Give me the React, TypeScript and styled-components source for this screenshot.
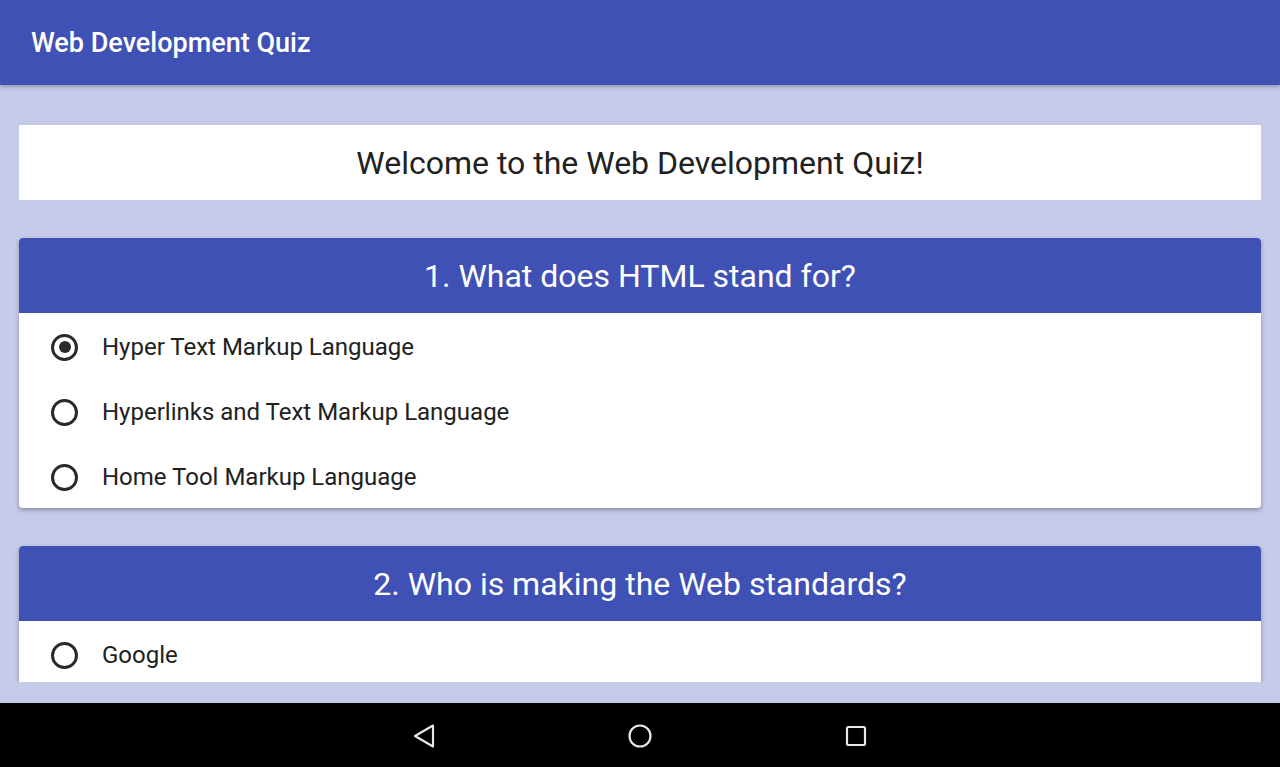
import styled, { createGlobalStyle } from 'styled-components';

const GlobalStyle = createGlobalStyle`
	html, body {
		margin: 0;
		padding: 0;
		background: #c5cae9;
		font-family: Roboto, "Noto Sans", sans-serif;
	}
`;

type Question = {
	title: string;
	options: string[];
	selected: number | null;
};

const questions: Question[] = [
	{
		title: '1. What does HTML stand for?',
		options: ['Hyper Text Markup Language', 'Hyperlinks and Text Markup Language', 'Home Tool Markup Language'],
		selected: 0,
	},
	{
		title: '2. Who is making the Web standards?',
		options: ['Google'],
		selected: null,
	},
];

const App = () => {
	return (
		<Screen>
			<GlobalStyle />
			<AppBar>
				<AppTitle>Web Development Quiz</AppTitle>
			</AppBar>
			<Content>
				<Welcome>Welcome to the Web Development Quiz!</Welcome>
				{questions.map((q) => (
					<Card key={q.title}>
						<CardHeader>{q.title}</CardHeader>
						{q.options.map((opt, i) => (
							<OptionRow key={opt}>
								<Radio $checked={q.selected === i} />
								<OptionText>{opt}</OptionText>
							</OptionRow>
						))}
					</Card>
				))}
			</Content>
			<NavBar>
				<svg width="24" height="26" viewBox="0 0 24 26">
					<path d="M21 2.5 L3 13 L21 23.5 Z" fill="none" stroke="#e8e8e8" strokeWidth="2.2" strokeLinejoin="round" />
				</svg>
				<svg width="26" height="26" viewBox="0 0 26 26">
					<circle cx="13" cy="13" r="10.5" fill="none" stroke="#e8e8e8" strokeWidth="2.2" />
				</svg>
				<svg width="24" height="24" viewBox="0 0 24 24">
					<rect x="3" y="3" width="18" height="18" rx="1.5" fill="none" stroke="#e8e8e8" strokeWidth="2.2" />
				</svg>
			</NavBar>
		</Screen>
	);
};

export default App;

const Screen = styled.div`
	width: 1280px;
	height: 767px;
	display: flex;
	flex-direction: column;
	background: #c5cae9;
	overflow: hidden;
`;

const AppBar = styled.header`
	height: 85px;
	flex-shrink: 0;
	background: #3f51b5;
	display: flex;
	align-items: center;
	padding-left: 31px;
	box-shadow: 0 2px 4px rgba(0, 0, 0, 0.25);
	position: relative;
	z-index: 2;
`;

const AppTitle = styled.h1`
	margin: 0;
	color: #fff;
	font-size: 27px;
	font-weight: 500;
`;

const Content = styled.main`
	height: 597px;
	flex-shrink: 0;
	overflow: hidden;
	padding: 40px 19px 0;
	box-sizing: border-box;
	display: flex;
	flex-direction: column;
	gap: 38px;
`;

const Welcome = styled.div`
	background: #fff;
	height: 75px;
	flex-shrink: 0;
	display: flex;
	align-items: center;
	justify-content: center;
	color: #212121;
	font-size: 32px;
`;

const Card = styled.section`
	flex-shrink: 0;
	background: #fff;
	border-radius: 4px;
	overflow: hidden;
	box-shadow: 0 2px 4px rgba(0, 0, 0, 0.3);
`;

const CardHeader = styled.h2`
	margin: 0;
	height: 75px;
	background: #3f51b5;
	color: #fff;
	font-size: 32px;
	font-weight: 400;
	display: flex;
	align-items: center;
	justify-content: center;
`;

const OptionRow = styled.label`
	height: 65px;
	display: flex;
	align-items: center;
	padding-left: 32px;
	padding-top: 3px;
	box-sizing: border-box;
`;

const Radio = styled.span<{ $checked: boolean }>`
	width: 21px;
	height: 21px;
	border: 3px solid #2a2a2a;
	border-radius: 50%;
	display: flex;
	align-items: center;
	justify-content: center;
	box-sizing: content-box;
	&::after {
		content: '';
		width: 12px;
		height: 12px;
		border-radius: 50%;
		background: #2a2a2a;
		display: ${(p) => (p.$checked ? 'block' : 'none')};
	}
`;

const OptionText = styled.span`
	margin-left: 24px;
	font-size: 24px;
	color: #212121;
`;

const NavBar = styled.nav`
	margin-top: 21px;
	flex: 1;
	background: #000;
	display: flex;
	align-items: center;
	justify-content: center;
	gap: 191px;
	padding-top: 2px;
`;
